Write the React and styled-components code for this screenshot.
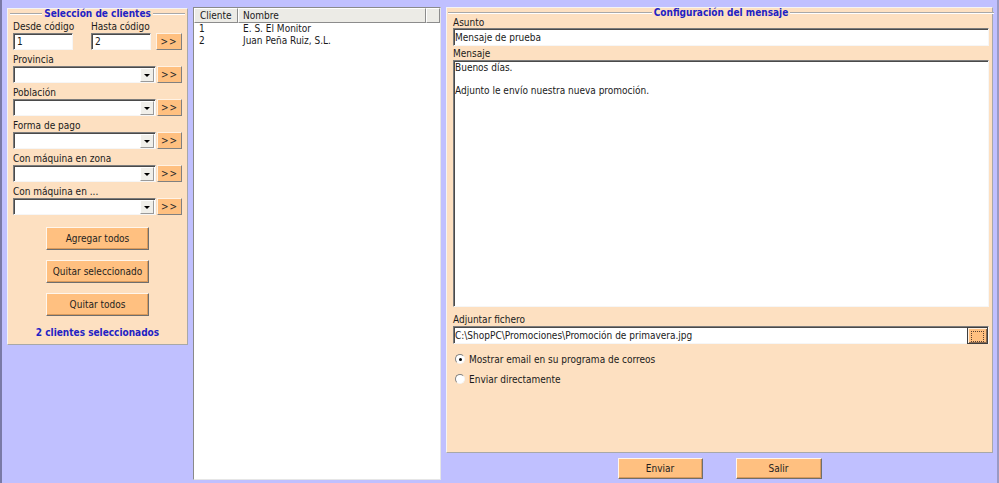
import React from 'react';
import styled, { createGlobalStyle } from 'styled-components';

const FONT = '"DejaVu Sans Condensed", "DejaVu Sans", sans-serif';

const GlobalStyle = createGlobalStyle`
  body {
    margin: 0;
    font-family: ${FONT};
    font-size: 10px;
    color: #1a1a1a;
  }
  * { box-sizing: border-box; }
`;

const Screen = styled.div`
  width: 999px;
  height: 483px;
  display: flex;
  align-items: flex-start;
  gap: 5px;
  padding: 7px 4px 0 5px;
  background: #c0c0ff;
  border-left: 2px solid #7a7aa6;
  border-right: 2px solid #9a9ac4;
  overflow: hidden;
`;

const Panel = styled.div`
  display: flex;
  flex-direction: column;
  width: ${(p) => p.$width}px;
  height: ${(p) => p.$height}px;
  margin-top: ${(p) => p.$top || 0}px;
  padding: ${(p) => p.$pad};
  background: #fde0c1;
  border: 1px solid;
  border-color: #f4f4f4 #a8a8a8 #a8a8a8 #f4f4f4;
`;

const GroupTitle = styled.div`
  display: flex;
  align-items: center;
  gap: 2px;
  height: 9px;
  margin: 0 ${(p) => p.$inset || 0}px;
  font-weight: bold;
  font-size: 10px;
  color: #2222c4;
  white-space: nowrap;

  &::before,
  &::after {
    content: '';
    flex: 1;
    border-top: 1px solid #a8a8a8;
    box-shadow: 0 1px 0 #ffffff;
  }
`;

const FieldGroup = styled.div`
  display: flex;
  flex-direction: column;
  margin-top: ${(p) => p.$top ?? 3}px;
`;

const Label = styled.div`
  height: ${(p) => p.$h || 13}px;
  line-height: ${(p) => p.$h || 13}px;
  margin-top: ${(p) => p.$top || 0}px;
  white-space: nowrap;
`;

const Row = styled.div`
  display: flex;
  align-items: flex-end;
  gap: ${(p) => p.$gap}px;
`;

const Column = styled.div`
  display: flex;
  flex-direction: column;
  width: ${(p) => p.$width}px;
  margin-left: ${(p) => p.$left || 0}px;
`;

const TextBox = styled.div`
  height: ${(p) => p.$h || 17}px;
  display: flex;
  align-items: center;
  padding-left: ${(p) => p.$pl ?? 3}px;
  background: #ffffff;
  border: 1px solid;
  border-color: #7c7c7c #f6f6f6 #f6f6f6 #7c7c7c;
  box-shadow: inset 1px 1px 0 #4a4a4a;
  white-space: nowrap;
  overflow: hidden;
`;

const Combo = styled.div`
  flex: 1;
  height: 17px;
  display: flex;
  justify-content: flex-end;
  align-items: center;
  padding: 1px 1px 1px 0;
  background: #ffffff;
  border: 1px solid;
  border-color: #7c7c7c #f6f6f6 #f6f6f6 #7c7c7c;
  box-shadow: inset 1px 1px 0 #4a4a4a;
`;

const DropButton = styled.div`
  width: 14px;
  height: 14px;
  margin-top: 1px;
  display: flex;
  align-items: center;
  justify-content: center;
  background: #f0efea;
  border: 1px solid;
  border-color: #ffffff #9a9a9a #9a9a9a #ffffff;

  &::after {
    content: '';
    border-left: 3px solid transparent;
    border-right: 3px solid transparent;
    border-top: 3px solid #000;
  }
`;

const MoreButton = styled.div`
  width: ${(p) => p.$w || 25}px;
  height: 17px;
  margin-left: ${(p) => p.$left || 0}px;
  display: flex;
  align-items: center;
  justify-content: center;
  background: #ffc080;
  border: 1px solid;
  border-color: #fff2e4 #808080 #808080 #fff2e4;
  letter-spacing: 1px;
  color: #2a2a2a;
  font-size: 10px;
`;

const ButtonStack = styled.div`
  display: flex;
  flex-direction: column;
  align-items: center;
  gap: 10px;
  margin-top: 12px;
`;

const ActionButton = styled.div`
  width: ${(p) => p.$w}px;
  height: ${(p) => p.$h || 23}px;
  display: flex;
  align-items: center;
  justify-content: center;
  background: #ffc080;
  border: 1px solid;
  border-color: #fff6ec #6e6e6e #6e6e6e #fff6ec;
  box-shadow: inset -1px -1px 0 #d99a5c;
  color: #1e1e1e;
`;

const Summary = styled.div`
  margin-top: 10px;
  text-align: center;
  line-height: 14px;
  font-weight: bold;
  font-size: 10px;
  color: #2222c4;
`;

const ListBox = styled.div`
  width: 249px;
  height: 473px;
  display: flex;
  flex-direction: column;
  background: #ffffff;
  border: 1px solid;
  border-color: #8a8a8a #e6e6e6 #e6e6e6 #8a8a8a;
`;

const ListHeader = styled.div`
  display: flex;
  height: 15px;
`;

const HeaderCell = styled.div`
  width: ${(p) => p.$w}px;
  flex: ${(p) => (p.$grow ? 1 : 'none')};
  line-height: 13px;
  padding-left: ${(p) => p.$pl || 0}px;
  background: #ecebe6;
  border: 1px solid;
  border-color: #ffffff #8c8c8c #8c8c8c #ffffff;
  white-space: nowrap;
`;

const ListRow = styled.div`
  display: flex;
  line-height: 12px;
  &:first-of-type {
    margin-top: 2px;
  }
`;

const ListCell = styled.div`
  width: ${(p) => p.$w}px;
  padding-left: ${(p) => p.$pl}px;
  white-space: nowrap;
`;

const RightColumn = styled.div`
  display: flex;
  flex-direction: column;
  align-items: stretch;
  width: 547px;
`;

const TextArea = styled.div`
  height: 247px;
  padding: 1px 1px;
  background: #ffffff;
  border: 1px solid;
  border-color: #7c7c7c #f6f6f6 #f6f6f6 #7c7c7c;
  box-shadow: inset 1px 1px 0 #4a4a4a;
  line-height: 12px;

  p {
    margin: 0 0 11px;
  }
`;

const FileField = styled.div`
  height: 18px;
  display: flex;
  align-items: center;
  justify-content: space-between;
  padding: 0 0 0 1px;
  background: #ffffff;
  border: 1px solid;
  border-color: #7c7c7c #f6f6f6 #f6f6f6 #7c7c7c;
  box-shadow: inset 1px 1px 0 #4a4a4a;
  white-space: nowrap;
`;

const BrowseButton = styled.div`
  width: 21px;
  height: 17px;
  padding: 3px;
  background: #ffc080;
  border: 1px solid #3e3e3e;
  box-shadow: inset 1px 1px 0 #fff0e0, inset -1px -1px 0 #8a6a50;

  &::after {
    content: '';
    display: block;
    height: 100%;
    border: 1px dotted #5a4030;
  }
`;

const RadioRow = styled.div`
  display: flex;
  align-items: center;
  gap: 4px;
  height: 20px;
  margin-top: ${(p) => p.$top || 0}px;
  padding-left: 2px;
`;

const RadioMark = styled.div`
  width: 10px;
  height: 10px;
  border-radius: 50%;
  display: flex;
  align-items: center;
  justify-content: center;
  background: #ffffff;
  border: 1px solid;
  border-color: #808080 #f4f4f4 #f4f4f4 #808080;

  &::after {
    content: '';
    width: 3px;
    height: 3px;
    border-radius: 50%;
    background: ${(p) => (p.$checked ? '#000' : 'transparent')};
  }
`;

const ButtonBar = styled.div`
  display: flex;
  justify-content: center;
  gap: 33px;
  margin-top: 5px;
`;

const combos = ['Provincia', 'Población', 'Forma de pago', 'Con máquina en zona', 'Con máquina en ...'];

const clients = [
  { id: '1', name: 'E. S. El Monitor' },
  { id: '2', name: 'Juan Peña Ruiz, S.L.' },
];

export default function App() {
  return (
    <>
      <GlobalStyle />
      <Screen>
        <Panel $width={181} $height={337} $top={1} $pad="0 5px">
          <GroupTitle $inset={-3}>Selección de clientes</GroupTitle>
          <FieldGroup $top={2}>
            <Row $gap={0}>
              <Column $width={60}>
                <Label>Desde código</Label>
                <TextBox>1</TextBox>
              </Column>
              <Column $width={60} $left={18}>
                <Label>Hasta código</Label>
                <TextBox>2</TextBox>
              </Column>
              <MoreButton $w={26} $left={5}>&gt;&gt;</MoreButton>
            </Row>
          </FieldGroup>
          {combos.map((c) => (
            <FieldGroup key={c}>
              <Label>{c}</Label>
              <Row $gap={1}>
                <Combo>
                  <DropButton />
                </Combo>
                <MoreButton>&gt;&gt;</MoreButton>
              </Row>
            </FieldGroup>
          ))}
          <ButtonStack>
            <ActionButton $w={103}>Agregar todos</ActionButton>
            <ActionButton $w={103}>Quitar seleccionado</ActionButton>
            <ActionButton $w={103}>Quitar todos</ActionButton>
          </ButtonStack>
          <Summary>2 clientes seleccionados</Summary>
        </Panel>

        <ListBox>
          <ListHeader>
            <HeaderCell $w={44} $pl={5}>Cliente</HeaderCell>
            <HeaderCell $w={188} $pl={4}>Nombre</HeaderCell>
            <HeaderCell $grow />
          </ListHeader>
          {clients.map((c) => (
            <ListRow key={c.id}>
              <ListCell $w={44} $pl={5}>{c.id}</ListCell>
              <ListCell $w={188} $pl={5}>{c.name}</ListCell>
            </ListRow>
          ))}
        </ListBox>

        <RightColumn>
          <Panel $width={547} $height={446} $pad="0 3px 0 6px">
            <GroupTitle $inset={-5}>Configuración del mensaje</GroupTitle>
            <Label $h={11}>Asunto</Label>
            <TextBox $h={18} $pl={1}>Mensaje de prueba</TextBox>
            <Label $top={1}>Mensaje</Label>
            <TextArea>
              <p>Buenos días.</p>
              <p>Adjunto le envío nuestra nueva promoción.</p>
            </TextArea>
            <Label $top={6}>Adjuntar fichero</Label>
            <FileField>
              C:\ShopPC\Promociones\Promoción de primavera.jpg
              <BrowseButton />
            </FileField>
            <RadioRow $top={5}>
              <RadioMark $checked />
              Mostrar email en su programa de correos
            </RadioRow>
            <RadioRow>
              <RadioMark />
              Enviar directamente
            </RadioRow>
          </Panel>
          <ButtonBar>
            <ActionButton $w={85} $h={21}>Enviar</ActionButton>
            <ActionButton $w={86} $h={21}>Salir</ActionButton>
          </ButtonBar>
        </RightColumn>
      </Screen>
    </>
  );
}
